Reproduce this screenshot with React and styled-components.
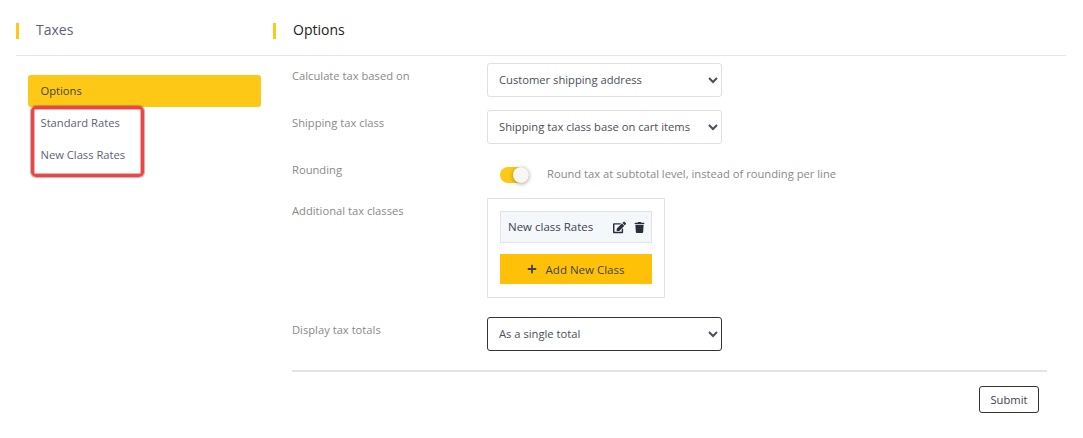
import React from "react";
import styled, { createGlobalStyle } from "styled-components";
import { FaEdit, FaTrash, FaPlus } from "react-icons/fa";

const Global = createGlobalStyle`
  html, body { margin: 0; padding: 0; background: #fff; }
  body { font-family: "Open Sans", "Noto Sans", sans-serif; color: #3f4254; }
  * { box-sizing: border-box; }
`;

const Page = styled.div`
  width: 1083px;
  height: 438px;
  padding-top: 16px;
  display: flex;
  overflow: hidden;
`;

const Sidebar = styled.aside`
  width: 257px;
  margin-left: 16px;
  flex: none;
`;

const Main = styled.main`
  width: 793px;
  flex: none;
`;

const Header = styled.header`
  height: 40px;
  padding-top: 7px;
  border-bottom: 1px solid #e4e4e4;
`;

const Title = styled.h2`
  margin: 0;
  height: 16px;
  border-left: 3px solid #fdc916;
  padding-left: ${(p) => p.$indent}px;
  font-size: 14px;
  line-height: 14px;
  font-weight: 500;
  color: ${(p) => p.$color};
`;

const Nav = styled.nav`
  position: relative;
  margin: 19px 0 0 12px;
  width: 233px;
  display: flex;
  flex-direction: column;
`;

const NavItem = styled.div`
  height: 32px;
  padding: 0 0 2px 12.5px;
  display: flex;
  align-items: center;
  font-size: 11.2px;
  border-radius: 3px;
  background: ${(p) => (p.$active ? "#fdc916" : "transparent")};
  color: ${(p) => (p.$active ? "#454545" : "#5e6278")};
`;

const Highlight = styled.div`
  position: absolute;
  left: 3px;
  top: 31px;
  width: 113px;
  height: 71px;
  border: 3px solid #ef4444;
  border-radius: 5px;
  box-shadow: 0 0 1px 1px rgba(90, 90, 90, 0.45), inset 0 0 0 1px rgba(239, 68, 68, 0.45);
  pointer-events: none;
`;

const Form = styled.form`
  padding: 7px 19px 0 19px;
  display: flex;
  flex-direction: column;
`;

const Row = styled.div`
  display: flex;
  align-items: flex-start;
  margin-bottom: ${(p) => p.$gap}px;
`;

const Label = styled.label`
  width: 195px;
  flex: none;
  padding-top: ${(p) => p.$top}px;
  font-size: 11.2px;
  line-height: 15px;
  color: #8a8a8a;
`;

const Select = styled.select`
  width: 235px;
  height: 34px;
  padding: 0 7px 2px;
  background-color: #fff;
  border: 1px solid ${(p) => (p.$focus ? "#333" : "#e0e0e0")};
  border-radius: 3px;
  font-family: inherit;
  font-size: 11.2px;
  color: #4b4f5c;
  outline: none;
`;

const ToggleWrap = styled.div`
  display: flex;
  align-items: center;
  padding: 9px 0 0 13px;
`;

const Track = styled.span`
  position: relative;
  display: block;
  width: 29px;
  height: 16px;
  border-radius: 8px;
  background: #fdc916;
`;

const Knob = styled.span`
  position: absolute;
  right: 0;
  top: 0;
  width: 16px;
  height: 16px;
  border-radius: 50%;
  background: #f7f7f7;
  box-shadow: 0 1px 4px rgba(0, 0, 0, 0.35);
`;

const ToggleText = styled.span`
  margin: 0 0 3px 18px;
  font-size: 11.2px;
  line-height: 15px;
  color: #8a8a8a;
`;

const ClassBox = styled.div`
  width: 178px;
  height: 100px;
  padding: 12px;
  border: 1px solid #e1e3ea;
`;

const ClassRow = styled.div`
  height: 32px;
  padding: 0 6px 0 7px;
  display: flex;
  align-items: center;
  background: #f5f8fa;
  border: 1px solid #e1e3ea;
  font-size: 11.5px;
  font-weight: 500;
  color: #3f4254;
`;

const ClassName = styled.span`
  flex: 1;
  padding-bottom: 1px;
`;

const IconBtn = styled.span`
  display: flex;
  margin-left: 8px;
  font-size: ${(p) => p.$size}px;
  color: #2b2d3a;
`;

const AddButton = styled.button`
  margin-top: 11px;
  width: 152px;
  height: 30px;
  border: none;
  background: #ffc107;
  display: flex;
  align-items: center;
  justify-content: center;
  gap: 9px;
  padding: 0 1px 0 0;
  font-family: inherit;
  font-size: 11.5px;
  font-weight: 500;
  color: #3f4254;
`;

const Divider = styled.hr`
  margin: 19px 0 0;
  border: none;
  border-top: 2px solid #e4e4e4;
`;

const Footer = styled.div`
  display: flex;
  justify-content: flex-end;
  padding: 14px 8px 0 0;
`;

const Submit = styled.button`
  width: 60px;
  height: 27px;
  padding: 0;
  background: #fff;
  border: 1px solid #333;
  border-radius: 3px;
  font-family: inherit;
  font-size: 11.2px;
  color: #3f4254;
`;

export default function App() {
  return (
    <Page>
      <Global />
      <Sidebar>
        <Header>
          <Title $indent={17} $color="#5e6278">Taxes</Title>
        </Header>
        <Nav>
          <NavItem $active>Options</NavItem>
          <NavItem>Standard Rates</NavItem>
          <NavItem>New Class Rates</NavItem>
          <Highlight />
        </Nav>
      </Sidebar>
      <Main>
        <Header>
          <Title $indent={17} $color="#222">Options</Title>
        </Header>
        <Form>
          <Row $gap={13}>
            <Label $top={5}>Calculate tax based on</Label>
            <Select defaultValue="a">
              <option value="a">Customer shipping address</option>
            </Select>
          </Row>
          <Row $gap={13}>
            <Label $top={5}>Shipping tax class</Label>
            <Select defaultValue="a">
              <option value="a">Shipping tax class base on cart items</option>
            </Select>
          </Row>
          <Row $gap={14}>
            <Label $top={5}>Rounding</Label>
            <ToggleWrap>
              <Track><Knob /></Track>
              <ToggleText>Round tax at subtotal level, instead of rounding per line</ToggleText>
            </ToggleWrap>
          </Row>
          <Row $gap={19}>
            <Label $top={5}>Additional tax classes</Label>
            <ClassBox>
              <ClassRow>
                <ClassName>New class Rates</ClassName>
                <IconBtn $size={13}><FaEdit /></IconBtn>
                <IconBtn $size={11}><FaTrash /></IconBtn>
              </ClassRow>
              <AddButton type="button"><FaPlus size={10} />Add New Class</AddButton>
            </ClassBox>
          </Row>
          <Row $gap={0}>
            <Label $top={5}>Display tax totals</Label>
            <Select $focus defaultValue="a">
              <option value="a">As a single total</option>
            </Select>
          </Row>
          <Divider />
          <Footer>
            <Submit type="button">Submit</Submit>
          </Footer>
        </Form>
      </Main>
    </Page>
  );
}
